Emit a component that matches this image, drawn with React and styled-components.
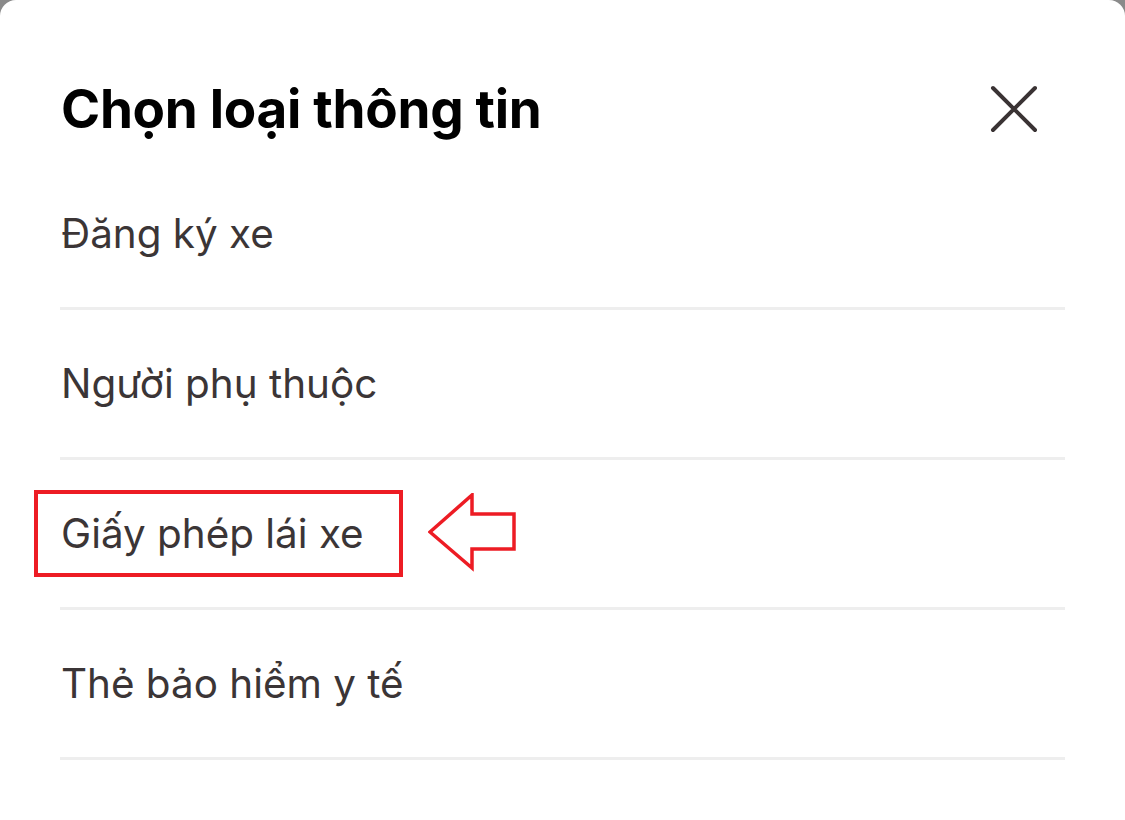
import styled, { createGlobalStyle } from "styled-components";

const GlobalStyle = createGlobalStyle`
  html, body {
    margin: 0;
    padding: 0;
    background: #8a8a8a;
  }
  body {
    font-family: Inter, "Noto Sans", "Liberation Sans", sans-serif;
  }
`;

const items = [
  { id: "xe", label: "Đăng ký xe" },
  { id: "phuthuoc", label: "Người phụ thuộc" },
  { id: "gplx", label: "Giấy phép lái xe", marked: true },
  { id: "bhyt", label: "Thẻ bảo hiểm y tế" },
];

const App = () => {
  return (
    <>
      <GlobalStyle />
      <Sheet>
        <Header>
          <Title>Chọn loại thông tin</Title>
          <CloseButton aria-label="Đóng">
            <svg width="48" height="48" viewBox="0 0 48 48">
              <path
                d="M3 3 L45 45 M45 3 L3 45"
                stroke="#3a3334"
                strokeWidth="4"
                strokeLinecap="round"
                fill="none"
              />
            </svg>
          </CloseButton>
        </Header>
        <List>
          {items.map((item) => (
            <Row key={item.id}>
              <Label $marked={item.marked}>
                {item.label}
                {item.marked && (
                  <Arrow width="92" height="82" viewBox="0 0 92 82">
                    <polygon
                      points="2,39 44,2 44,21 86,21 86,56 44,56 44,75"
                      fill="none"
                      stroke="#ed1c24"
                      strokeWidth="3.5"
                      strokeLinejoin="miter"
                    />
                  </Arrow>
                )}
              </Label>
            </Row>
          ))}
        </List>
      </Sheet>
    </>
  );
};

export default App;

const Sheet = styled.div`
  background: #ffffff;
  min-height: 820px;
  border-radius: 16px 16px 0 0;
  padding: 0 60px;
  box-sizing: border-box;
`;

const Header = styled.div`
  height: 160px;
  display: flex;
  align-items: center;
  justify-content: space-between;
  padding-top: 60px;
  padding-bottom: 2px;
  box-sizing: border-box;
`;

const Title = styled.h1`
  margin: 0 0 0 1px;
  font-size: 53px;
  font-weight: 700;
  color: #000000;
  letter-spacing: -0.3px;
`;

const CloseButton = styled.button`
  width: 48px;
  height: 48px;
  margin-right: 27px;
  padding: 0;
  border: none;
  background: transparent;
  display: flex;
  align-items: center;
  justify-content: center;
`;

const List = styled.div`
  display: flex;
  flex-direction: column;
`;

const Row = styled.div`
  height: 147px;
  display: flex;
  align-items: center;
  border-bottom: 3px solid #eeeeee;
`;

const Label = styled.span`
  position: relative;
  margin-left: 1px;
  font-size: 40.4px;
  font-weight: 400;
  color: #3b3536;

  ${({ $marked }) =>
    $marked &&
    `
    &::after {
      content: "";
      position: absolute;
      left: -27px;
      right: -39px;
      top: -19px;
      bottom: -19px;
      border: 4px solid #ed1c24;
    }
  `}
`;

const Arrow = styled.svg`
  position: absolute;
  left: calc(100% + 64px);
  top: 50%;
  transform: translateY(-50%);
`;
